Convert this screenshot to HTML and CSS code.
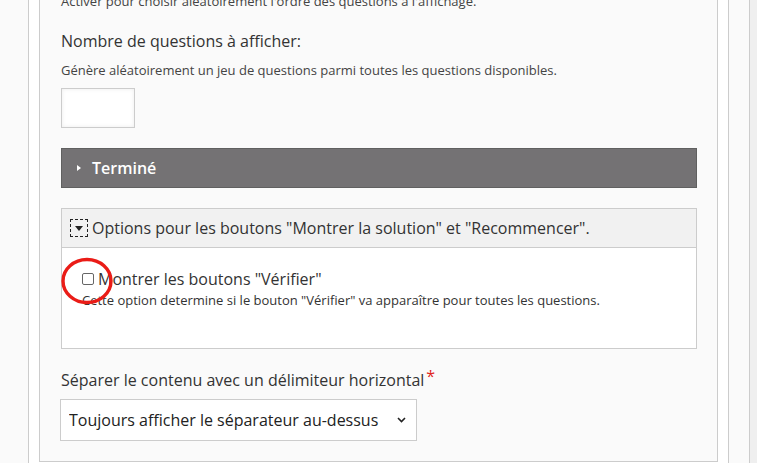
FILE: index.html
```html
<!DOCTYPE html>
<html lang="fr">
<head>
    <meta charset="UTF-8">
    <meta name="viewport" content="width=device-width, initial-scale=1.0">
    <title>Options</title>
    <link rel="stylesheet" href="styles.css">
</head>
<body>
    <div class="page">
        <div class="gutter"></div>
        <div class="content">
            <div class="fieldset">
                <p class="desc">Activer pour choisir aléatoirement l'ordre des questions à l'affichage.</p>

                <label class="field-label" for="pool-size">Nombre de questions à afficher:</label>
                <p class="desc desc-after-label">Génère aléatoirement un jeu de questions parmi toutes les questions disponibles.</p>
                <input class="num-input" id="pool-size" type="text">

                <div class="group-bar">
                    <span class="caret"></span>
                    <span>Terminé</span>
                </div>

                <div class="options">
                    <div class="options-head">
                        <span class="toggle">
                            <svg width="8" height="5" viewBox="0 0 8 5"><path d="M0 0h8L4 5z" fill="#222"/></svg>
                        </span>
                        <span>Options pour les boutons "Montrer la solution" et "Recommencer".</span>
                    </div>
                    <div class="options-body">
                        <label class="check-row">
                            <input class="check" type="checkbox">
                            <span>Montrer les boutons "Vérifier"</span>
                        </label>
                        <p class="desc check-desc">Cette option determine si le bouton "Vérifier" va apparaître pour toutes les questions.</p>
                        <!-- red annotation circle -->
                        <svg class="highlight" width="54" height="48" viewBox="0 0 54 48">
                            <ellipse cx="27" cy="24" rx="24" ry="21.5" fill="none" stroke="#ea1c17" stroke-width="3.4"/>
                        </svg>
                    </div>
                </div>

                <label class="field-label sep-label" for="separator">Séparer le contenu avec un délimiteur horizontal<span class="req">*</span></label>
                <div class="select-wrap">
                    <select class="select" id="separator">
                        <option>Toujours afficher le séparateur au-dessus</option>
                    </select>
                    <svg class="chevron" width="9" height="6" viewBox="0 0 9 6"><path d="M1 1l3.5 3.5L8 1" fill="none" stroke="#222" stroke-width="1.6"/></svg>
                </div>
            </div>
        </div>
        <div class="spacer"></div>
        <div class="sidebar"></div>
    </div>
</body>
</html>
```

FILE: styles.css
```css
body {
    font-family: "Open Sans", "Noto Sans", sans-serif;
    margin: 0;
    padding: 0;
    color: #333;
    background-color: #fafafa;
    overflow: hidden;
}

.page {
    display: flex;
    height: 100vh;
}

.gutter {
    width: 28px;
    flex-shrink: 0;
}

.content {
    width: 701px;
    box-sizing: border-box;
    flex-shrink: 0;
    padding: 0 10px;
    background-color: #fff;
    border-left: 1px solid #ccc;
    border-right: 1px solid #ccc;
}

.fieldset {
    width: 679px;
    box-sizing: border-box;
    margin-top: -8px;
    padding: 0 20px 20px 21px;
    background-color: #fafafa;
    border: 1px solid #ccc;
    border-top: none;
}

.spacer {
    width: 20px;
    flex-shrink: 0;
}

.sidebar {
    flex: 1;
    background-color: #efefef;
    border-left: 1px solid #ccc;
}

.desc {
    margin: 0;
    font-size: 13px;
    line-height: 18px;
    color: #444;
}

.field-label {
    display: block;
    margin-top: 19px;
    font-size: 16px;
    line-height: 24px;
    color: #333;
}

.desc-after-label {
    margin-top: 8px;
}

.num-input {
    display: block;
    width: 74px;
    height: 40px;
    box-sizing: border-box;
    margin-top: 9px;
    border: 1px solid #ccc;
    background-color: #fff;
    box-shadow: inset 0 0 4px rgba(0, 0, 0, 0.08);
}

.group-bar {
    display: flex;
    align-items: center;
    height: 40px;
    box-sizing: border-box;
    margin-top: 20px;
    padding-left: 15px;
    background-color: #747274;
    border: 1px solid #606060;
    color: #fff;
    font-size: 16px;
    font-weight: 600;
}

.caret {
    width: 0;
    height: 0;
    margin-right: 11px;
    border-top: 3.5px solid transparent;
    border-bottom: 3.5px solid transparent;
    border-left: 4px solid #fff;
}

.options {
    margin-top: 20px;
    border: 1px solid #ccc;
}

.options-head {
    display: flex;
    align-items: center;
    height: 39px;
    box-sizing: border-box;
    padding-left: 8px;
    background-color: #f1f1f1;
    border-bottom: 1px solid #ccc;
    font-size: 16px;
}

.toggle {
    display: flex;
    align-items: center;
    justify-content: center;
    width: 18px;
    height: 18px;
    box-sizing: border-box;
    margin-right: 4px;
    border: 1px dashed #222;
}

.options-body {
    position: relative;
    height: 100px;
    box-sizing: border-box;
    padding: 19px 20px 0;
    background-color: #fff;
}

.check-row {
    display: flex;
    align-items: center;
    font-size: 16px;
    line-height: 24px;
}

.check {
    appearance: none;
    width: 12px;
    height: 12px;
    margin: 0 4px 0 0;
    border: 1px solid #666;
    border-radius: 2px;
    background-color: #fff;
}

.check-desc {
    color: #333;
}

.highlight {
    position: absolute;
    left: -2px;
    top: 9px;
}

.req {
    color: #e0261b;
    font-size: 16px;
    position: relative;
    top: -4px;
    margin-left: 2px;
}

.sep-label {
    margin-top: 19px;
}

.select-wrap {
    position: relative;
    width: 357px;
    margin-top: 7px;
    margin-left: -1px;
}

.select {
    appearance: none;
    display: block;
    width: 100%;
    height: 42px;
    padding: 0 0 0 8px;
    border: 1px solid #ccc;
    border-radius: 0;
    background-color: #fff;
    color: #222;
    font-family: "Open Sans", "Noto Sans", sans-serif;
    font-size: 16px;
}

.chevron {
    position: absolute;
    right: 11px;
    top: 18px;
    pointer-events: none;
}
```
